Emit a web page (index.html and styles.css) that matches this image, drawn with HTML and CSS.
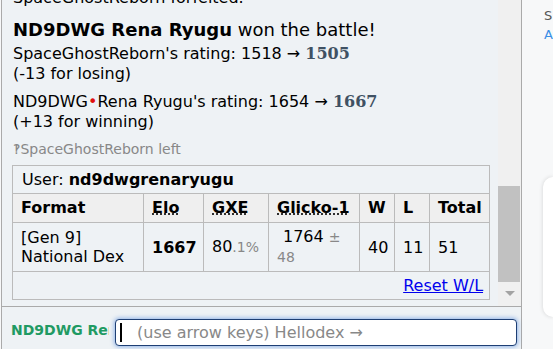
FILE: index.html
```html
<!DOCTYPE html>
<html lang="en">
<head>
    <meta charset="UTF-8">
    <meta name="viewport" content="width=device-width, initial-scale=1.0">
    <title>Battle: ND9DWG Rena Ryugu vs. SpaceGhostReborn</title>
    <link rel="stylesheet" href="styles.css">
</head>
<body>
    <div class="app">
        <div class="room">
            <div class="logwrap">
                <div class="log">
                    <div class="msg forfeit">SpaceGhostReborn forfeited.</div>
                    <div class="win"><strong>ND9DWG Rena Ryugu</strong> won the battle!</div>
                    <div class="msg rating">SpaceGhostReborn's rating: 1518 &rarr; <strong class="num">1505</strong><br>(-13 for losing)</div>
                    <div class="msg rating second">ND9DWG<span class="dot">&bull;</span>Rena Ryugu's rating: 1654 &rarr; <strong class="num">1667</strong><br>(+13 for winning)</div>
                    <div class="left">&#8253;SpaceGhostReborn left</div>
                    <table class="ladder">
                        <colgroup>
                            <col class="c-format">
                            <col class="c-elo">
                            <col class="c-gxe">
                            <col class="c-glicko">
                            <col class="c-w">
                            <col class="c-l">
                            <col class="c-total">
                        </colgroup>
                        <tr><td colspan="7" class="user">User: <strong>nd9dwgrenaryugu</strong></td></tr>
                        <tr>
                            <th>Format</th>
                            <th><abbr title="Elo rating">Elo</abbr></th>
                            <th><abbr title="user's percentage chance of winning a random battle (aka GLIXARE)">GXE</abbr></th>
                            <th><abbr title="Glicko-1 rating: rating &plusmn; deviation">Glicko-1</abbr></th>
                            <th>W</th>
                            <th>L</th>
                            <th>Total</th>
                        </tr>
                        <tr class="data">
                            <td>[Gen 9]<br>National Dex</td>
                            <td><strong>1667</strong></td>
                            <td>80<small>.1%</small></td>
                            <td><span class="glicko">1764</span> <small>&plusmn;<br>48</small></td>
                            <td>40</td>
                            <td>11</td>
                            <td>51</td>
                        </tr>
                        <tr><td colspan="7" class="reset"><a href="#">Reset W/L</a></td></tr>
                    </table>
                </div>
                <div class="scrollbar">
                    <div class="thumb"></div>
                    <div class="arrow"></div>
                </div>
            </div>
            <div class="chatbar">
                <div class="name">ND9DWG Rena Ryugu</div>
                <div class="textbox">
                    <span class="caret"></span>
                    <span class="placeholder">(use arrow keys) Hellodex &rarr;</span>
                </div>
            </div>
        </div>
        <div class="side">
            <div class="side-s">S</div>
            <div class="side-a">A</div>
            <div class="card"></div>
        </div>
    </div>
</body>
</html>
```

FILE: styles.css
```css
* {margin: 0; padding: 0; box-sizing: border-box;}
body {background: #f7f8f9; font-family: "DejaVu Sans", Verdana, sans-serif; font-size: 16px; color: #000;}
.app {display: flex; height: 349px; overflow: hidden;}

/* battle room */
.room {
width: 526px;
margin-left: 1px;
border-left: 1px solid #aaa;
border-right: 1px solid #aaa;
background: #eef2f5;
display: flex;
flex-direction: column;
}
.logwrap {display: flex; height: 307px; border-bottom: 1px solid #aaa;}
.log {flex: 1; overflow: hidden; padding-left: 11px;}
.msg {line-height: 20px;}
.forfeit {margin-top: -12px;}
.win {margin-top: 11px; font-size: 18px; line-height: 22px;}
.rating {margin-top: 3px;}
.rating.second {margin-top: 8px;}
.num {color: #3f5163; font-family: "DejaVu Serif", Georgia, serif;}
.dot {color: #e01010;}
.left {margin-top: 8px; font-size: 14px; line-height: 18px; color: #888;}

/* ladder table */
.ladder {
margin: 7px 0 0 -1px;
width: 477px;
table-layout: fixed;
border-collapse: collapse;
line-height: 19px;
}
.ladder td, .ladder th {border: 1px solid #bbb; padding: 4px 8px; text-align: left;}
.ladder th {background: #efefef; padding: 4px 8px 5px;}
.ladder abbr {text-decoration: underline dotted; cursor: help;}
.ladder small {font-size: 14px; color: #888;}
.ladder .user {padding: 4px 9px;}
.ladder .glicko {padding-left: 6px;}
.ladder .reset {text-align: right; padding: 4px 6px 4px 8px;}
.ladder .reset a {color: #00e;}
.c-format {width: 131px;}
.c-elo {width: 60px;}
.c-gxe {width: 65px;}
.c-glicko {width: 91px;}
.c-w {width: 35px;}
.c-l {width: 35px;}
.c-total {width: 60px;}

/* scrollbar */
.scrollbar {width: 23px; background: #f0f0f0;}
.thumb {margin: 186px 1px 0 0; height: 96px; background: #c1c1c1;}
.arrow {
margin: 9px auto 0;
width: 0;
height: 0;
border-left: 5px solid transparent;
border-right: 5px solid transparent;
border-top: 5px solid #a3a3a3;
}

/* chat input */
.chatbar {flex: 1; display: flex; align-items: flex-start; padding: 12px 0 0 9px;}
.name {
width: 98px;
margin-top: 1px;
overflow: hidden;
white-space: nowrap;
font-size: 14px;
font-weight: bold;
line-height: 20px;
color: #1f9a63;
}
.textbox {
display: flex;
align-items: center;
margin-left: 6px;
width: 402px;
height: 27px;
padding-left: 4px;
background: #fff;
border: 1px solid #1e3f74;
border-radius: 4px;
box-shadow: 0 0 4px 1px rgba(70, 130, 220, 0.55);
}
.caret {width: 2px; height: 19px; background: #000;}
.placeholder {margin-left: 15px; color: #888;}

/* right side panel */
.side {flex: 1; padding: 6px 0 0 22px; font-size: 13px; line-height: 19px;}
.side-s {color: #555;}
.side-a {color: #3a8ee6;}
.card {
margin: 133px 0 0 -1px;
height: 140px;
background: #fff;
border-radius: 10px 0 0 10px;
box-shadow: 0 0 4px rgba(0, 0, 0, 0.15);
}
```
